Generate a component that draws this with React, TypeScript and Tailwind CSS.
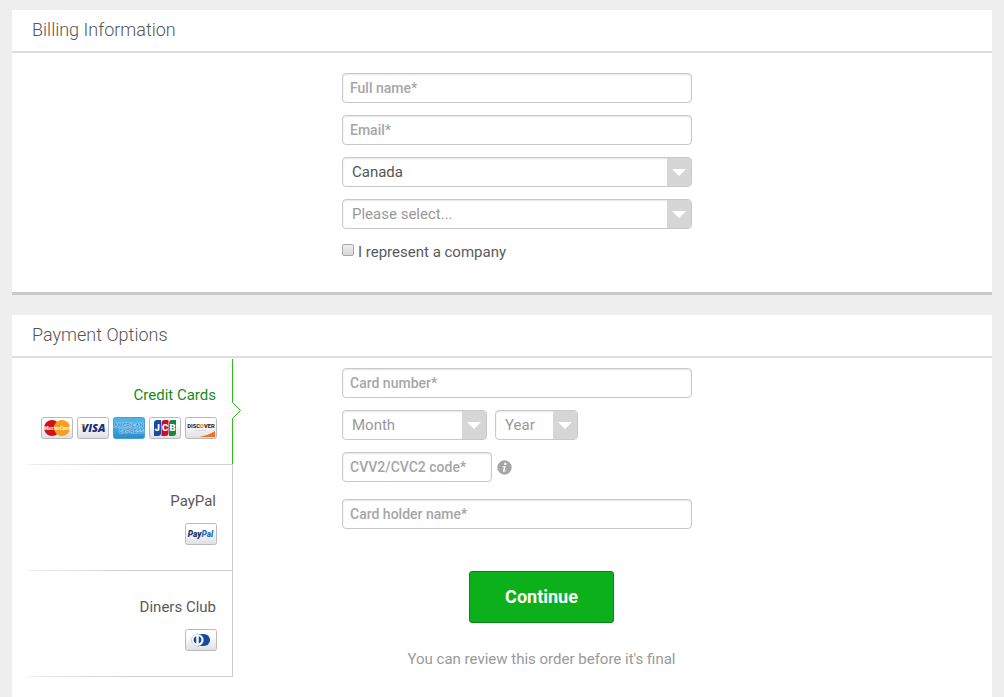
import { useState, type ReactNode } from "react";

type Method = "cards" | "paypal" | "diners";

const fieldClass =
  "h-[30px] w-full rounded border border-[#c8c8c8] bg-white px-[7px] text-[14px] font-medium text-[#555] shadow-[inset_0_1px_2px_rgba(0,0,0,0.1)] outline-none placeholder:text-[#a6a6a6] placeholder:opacity-100";

function TextField({ label, className = "w-full" }: { label: string; className?: string }) {
  return (
    <div className={className}>
      <input type="text" aria-label={label} placeholder={label} className={fieldClass} />
    </div>
  );
}

function SelectField({
  label,
  options,
  muted = true,
  className = "w-full",
}: {
  label: string;
  options: string[];
  muted?: boolean;
  className?: string;
}) {
  return (
    <div className={`relative ${className}`}>
      <select
        aria-label={label}
        className={`block h-[30px] w-full appearance-none rounded border border-[#c8c8c8] bg-white pr-7 pl-[9px] text-[15px] shadow-[inset_0_1px_2px_rgba(0,0,0,0.1)] outline-none ${
          muted ? "text-[#999]" : "text-[#555]"
        }`}
      >
        {options.map((option) => (
          <option key={option}>{option}</option>
        ))}
      </select>
      <span className="pointer-events-none absolute inset-y-px right-px flex w-6 items-center justify-center rounded-r-[3px] bg-[#d6d6d6]">
        <svg width="14" height="7" viewBox="0 0 14 7" aria-hidden="true">
          <path d="M0 0h14L7 7z" fill="#fff" />
        </svg>
      </span>
    </div>
  );
}

function Card({ name, children, blue = false }: { name: string; children: ReactNode; blue?: boolean }) {
  return (
    <svg width="32" height="22" viewBox="0 0 32 22" role="img" aria-label={name}>
      <defs>
        <linearGradient id={`face-${name}`} x1="0" y1="0" x2="0" y2="1">
          <stop offset="0.3" stopColor={blue ? "#52b4e6" : "#ffffff"} />
          <stop offset="1" stopColor={blue ? "#268ccb" : "#dedee4"} />
        </linearGradient>
      </defs>
      <rect
        x="0.5"
        y="0.5"
        width="31"
        height="21"
        rx="2"
        fill={`url(#face-${name})`}
        stroke={blue ? "#4b9fce" : "#b9b9c2"}
      />
      {children}
    </svg>
  );
}

const logoFont = "Roboto, 'Liberation Sans', sans-serif";

function MasterCard() {
  return (
    <Card name="MasterCard">
      <circle cx="11" cy="11" r="8" fill="#d0121b" />
      <circle cx="21" cy="11" r="8" fill="#f99d1c" />
      <text x="16" y="13" textAnchor="middle" fontFamily={logoFont} fontSize="5.2" fontWeight="700" fontStyle="italic" fill="#fff">
        MasterCard
      </text>
    </Card>
  );
}

function Visa() {
  return (
    <Card name="Visa">
      <text x="16.5" y="15.4" textAnchor="middle" fontFamily="'Open Sans', Roboto, sans-serif" fontSize="11" fontWeight="800" fontStyle="italic" fill="#16307f">
        VISA
      </text>
      <path d="M3.5 7.2h4l1.3 3.6C7.6 9 6 7.9 3.5 7.5z" fill="#f2a01c" />
    </Card>
  );
}

function Amex() {
  return (
    <Card name="Amex" blue>
      <g fontFamily={logoFont} fontSize="5.8" fontWeight="900" textAnchor="middle" fill="#3a9ad4" stroke="#cdebfa" strokeWidth="0.7" paintOrder="stroke">
        <text x="15.5" y="10.4">AMERICAN</text>
        <text x="18.5" y="16">EXPRESS</text>
      </g>
    </Card>
  );
}

function Jcb() {
  return (
    <Card name="JCB">
      <path d="M8 3h4v13a3 3 0 0 1-3 3H5V6a3 3 0 0 1 3-3z" fill="#174d9f" />
      <path d="M15.5 3h4v13a3 3 0 0 1-3 3h-4V6a3 3 0 0 1 3-3z" fill="#c8102e" />
      <path d="M23 3h4v13a3 3 0 0 1-3 3h-4V6a3 3 0 0 1 3-3z" fill="#168642" />
      <g fontFamily={logoFont} fontSize="9.5" fontWeight="900" textAnchor="middle" fill="#fff">
        <text x="8.2" y="14.4">J</text>
        <text x="16" y="14.4">C</text>
        <text x="23.5" y="14.4">B</text>
      </g>
    </Card>
  );
}

function Discover() {
  return (
    <Card name="Discover">
      <path d="M30 14v6H14c6-1 12-3 16-6z" fill="#f37021" />
      <text x="16" y="11.2" textAnchor="middle" fontFamily={logoFont} fontSize="5.8" fontWeight="800" fill="#2b2523">
        DISC<tspan fill="#f37021">O</tspan>VER
      </text>
      <path d="M10 13.5h12" stroke="#bbb" strokeWidth="0.6" strokeDasharray="2 1" />
    </Card>
  );
}

function PayPal() {
  return (
    <Card name="PayPal">
      <text x="15.5" y="13.8" textAnchor="middle" fontFamily={logoFont} fontSize="8.4" fontWeight="900" fontStyle="italic" fill="#1e3263">
        Pay<tspan fill="#2a6db0">Pal</tspan>
      </text>
    </Card>
  );
}

function Diners() {
  return (
    <Card name="Diners">
      <path d="M12 5h7a6 6 0 0 1 0 12h-7z" fill="#17479e" />
      <circle cx="12.5" cy="11" r="6" fill="#fff" stroke="#9db4d8" strokeWidth="0.6" />
      <path d="M11.3 7.2a4 4 0 0 0 0 7.6zM13.7 7.2a4 4 0 0 1 0 7.6z" fill="#17479e" />
    </Card>
  );
}

const methods: { id: Method; label: string; logos: ReactNode }[] = [
  { id: "cards", label: "Credit Cards", logos: <><MasterCard /><Visa /><Amex /><Jcb /><Discover /></> },
  { id: "paypal", label: "PayPal", logos: <PayPal /> },
  { id: "diners", label: "Diners Club", logos: <Diners /> },
];

function PanelTitle({ children }: { children: ReactNode }) {
  return (
    <h2 className="border-b-2 border-[#ddd] px-5 pt-2 pb-[9px] text-[18px] leading-6 font-light text-[#555]">
      {children}
    </h2>
  );
}

export default function App() {
  const [method, setMethod] = useState<Method>("cards");

  return (
    <main className="min-h-screen bg-[#eee] px-3 pt-[10px] font-['Roboto','Liberation_Sans',sans-serif] text-[15px] leading-5 text-[#5a5a5a]">
      <section className="border-b-3 border-[#c9c9c9] bg-white">
        <PanelTitle>Billing Information</PanelTitle>
        <div className="pt-5 pr-4 pb-[30px] pl-[330px]">
          <div className="flex max-w-[350px] flex-col gap-3">
            <TextField label="Full name*" />
            <TextField label="Email*" />
            <SelectField label="Country" options={["Canada", "United States"]} muted={false} />
            <SelectField label="Province" options={["Please select...", "Ontario", "Quebec"]} />
            <label className="flex items-center gap-1 pt-px">
              <input
                type="checkbox"
                className="mb-1 h-3 w-3 appearance-none rounded-[2px] border border-[#a9a9a9] bg-linear-to-b from-[#eee] to-[#d8d8d8] checked:from-[#555] checked:to-[#555]"
              />
              I represent a company
            </label>
          </div>
        </div>
      </section>

      <section className="mt-5 bg-white">
        <PanelTitle>Payment Options</PanelTitle>
        <div className="flex pr-4 pb-10 pl-4">
          <div role="tablist" aria-label="Payment method" className="mt-px w-[205px] shrink-0">
            {methods.map(({ id, label, logos }) => {
              const active = method === id;
              return (
                <div key={id}>
                  <button
                    type="button"
                    role="tab"
                    aria-selected={active}
                    onClick={() => setMethod(id)}
                    className={`relative flex w-full flex-col items-end gap-3 border-r pt-[26px] pr-[15px] pb-[25px] ${
                      active ? "border-[#2dbb1e] text-[#168a22]" : "border-[#ccc] text-[#5a5a5a]"
                    }`}
                  >
                    <span className="pr-px">{label}</span>
                    <span className="flex gap-1">{logos}</span>
                    {active && (
                      <svg className="absolute top-[43px] -right-[9px]" width="9" height="17" viewBox="0 0 9 17" aria-hidden="true">
                        <path d="M0 0h1l7.5 8.5L1 17H0z" fill="#fff" />
                        <path d="M0.5 0v0.5l8 8-8 8v0.5" fill="none" stroke="#2dbb1e" />
                      </svg>
                    )}
                  </button>
                  <div className="h-px bg-linear-to-r from-[#eee] to-[#d0d0d0] to-50%" />
                </div>
              );
            })}
          </div>

          <form className="ml-[109px] flex w-full max-w-[399px] flex-col pt-[10px]" onSubmit={(e) => e.preventDefault()}>
            <div className="flex max-w-[350px] flex-col gap-3">
              <TextField label="Card number*" />
              <div className="flex gap-2">
                <SelectField label="Expiry month" options={["Month", "01", "02", "03"]} className="w-[145px]" />
                <SelectField label="Expiry year" options={["Year", "2025", "2026", "2027"]} className="w-[83px]" />
              </div>
              <div className="flex items-center gap-[5px]">
                <TextField label="CVV2/CVC2 code*" className="w-[150px]" />
                <svg width="15" height="15" viewBox="0 0 15 15" role="img" aria-label="About the security code">
                  <circle cx="7.5" cy="7.5" r="7.2" fill="#a6a6a6" />
                  <circle cx="8.3" cy="3.9" r="1.2" fill="#fff" />
                  <path d="M5.5 6.2h3.3l-1.2 4.6 1.5-.5-.2.8c-1 .7-3.3 1.3-2.9-.3l.9-3.6-1.5-.2z" fill="#fff" />
                </svg>
              </div>
            </div>
            <div className="mt-[17px] max-w-[350px]">
              <TextField label="Card holder name*" />
            </div>
            <button
              type="submit"
              className="mt-[42px] h-[52px] w-[145px] self-center rounded-[3px] border border-[#07850f] bg-[#0bb01a] text-[18px] font-bold text-white"
            >
              Continue
            </button>
            <p className="mt-[26px] text-center text-[#999]">You can review this order before it's final</p>
          </form>
        </div>
      </section>
    </main>
  );
}
